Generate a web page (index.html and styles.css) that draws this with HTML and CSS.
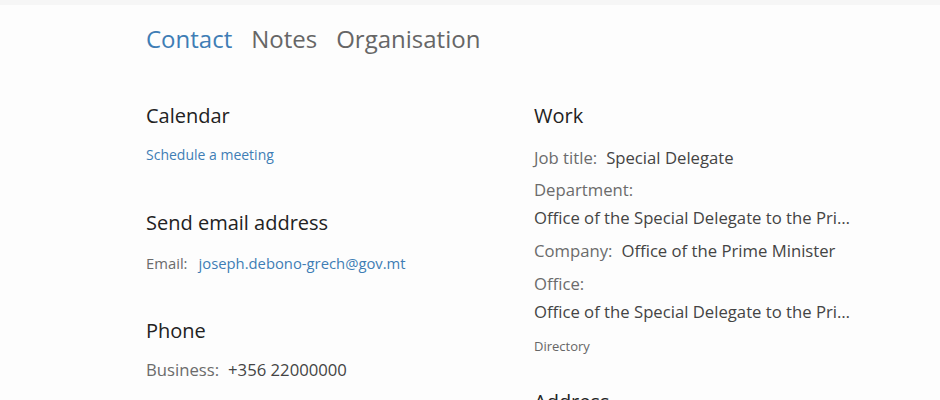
FILE: index.html
```html
<!DOCTYPE html>
<html lang="en">
<head>
<meta charset="utf-8">
<title>Contact</title>
<link rel="stylesheet" href="styles.css">
</head>
<body>
<div class="topbar"></div>
<div class="page">
  <nav class="tabs">
    <span class="tab active">Contact</span>
    <span class="tab">Notes</span>
    <span class="tab">Organisation</span>
  </nav>
  <div class="columns">
    <div class="col">
      <section class="sec">
        <h2 class="heading">Calendar</h2>
        <a class="link small" href="#">Schedule a meeting</a>
      </section>
      <section class="sec">
        <h2 class="heading">Send email address</h2>
        <div class="row small"><span class="label">Email:</span><a class="link" href="#">joseph.debono-grech@gov.mt</a></div>
      </section>
      <section class="sec">
        <h2 class="heading">Phone</h2>
        <div class="row"><span class="label">Business:</span><span class="value">+356 22000000</span></div>
      </section>
    </div>
    <div class="col right">
      <section class="sec">
        <h2 class="heading">Work</h2>
        <div class="row first"><span class="label">Job title:</span><span class="value">Special Delegate</span></div>
        <div class="row"><span class="label">Department:</span></div>
        <div class="row trunc tight"><span class="value">Office of the Special Delegate to the Prime Minister</span></div>
        <div class="row"><span class="label">Company:</span><span class="value">Office of the Prime Minister</span></div>
        <div class="row"><span class="label">Office:</span></div>
        <div class="row trunc tight"><span class="value">Office of the Special Delegate to the Prime Minister</span></div>
        <div class="dir">Directory</div>
      </section>
      <section class="sec">
        <h2 class="heading">Address</h2>
      </section>
    </div>
  </div>
</div>
</body>
</html>
```
FILE: styles.css
```css
html, body {
  margin: 0;
  padding: 0;
  background: #fdfdfd;
  font-family: "Open Sans", "Noto Sans", sans-serif;
  color: #444;
  overflow: hidden;
  height: 400px;
}
.topbar {
  height: 5px;
  background: #f6f6f6;
}
.page {
  padding-left: 146px;
}
.tabs {
  display: flex;
  gap: 19px;
  margin-top: 16px;
  height: 36px;
  line-height: 36px;
  font-size: 24px;
  color: #666;
}
.tab.active {
  color: #3f7db5;
}
.columns {
  display: flex;
  margin-top: 45px;
}
.col {
  width: 388px;
  display: flex;
  flex-direction: column;
}
.col.right {
  width: 330px;
}
.sec {
  display: flex;
  flex-direction: column;
  margin-bottom: 44px;
}
.heading {
  margin: 0;
  font-weight: normal;
  font-size: 20px;
  line-height: 28px;
  color: #222;
}
.small {
  font-size: 14px;
}
.link {
  color: #3f7db5;
  text-decoration: none;
}
a.small {
  margin-top: 15px;
  line-height: 20px;
}
.row {
  display: flex;
  gap: 9px;
  line-height: 24px;
  font-size: 16.7px;
  margin-top: 9px;
  white-space: nowrap;
}
.row.small {
  font-size: 14.8px;
  line-height: 20px;
  margin-top: 16px;
  gap: 11px;
}
.col:first-child .row:not(.small) {
  margin-top: 14px;
  line-height: 22px;
}
.row.first {
  margin-top: 16px;
}
.row.tight {
  margin-top: 4px;
}
.row:nth-child(3) {
  margin-top: 8px;
}
.label {
  color: #6b6b6b;
}
.value {
  color: #444;
}
.trunc .value {
  overflow: hidden;
  text-overflow: ellipsis;
  max-width: 320px;
}
.dir {
  font-size: 13px;
  line-height: 20px;
  color: #666;
  margin-top: 12px;
}
.right .sec:first-child {
  margin-bottom: 32px;
}
```
